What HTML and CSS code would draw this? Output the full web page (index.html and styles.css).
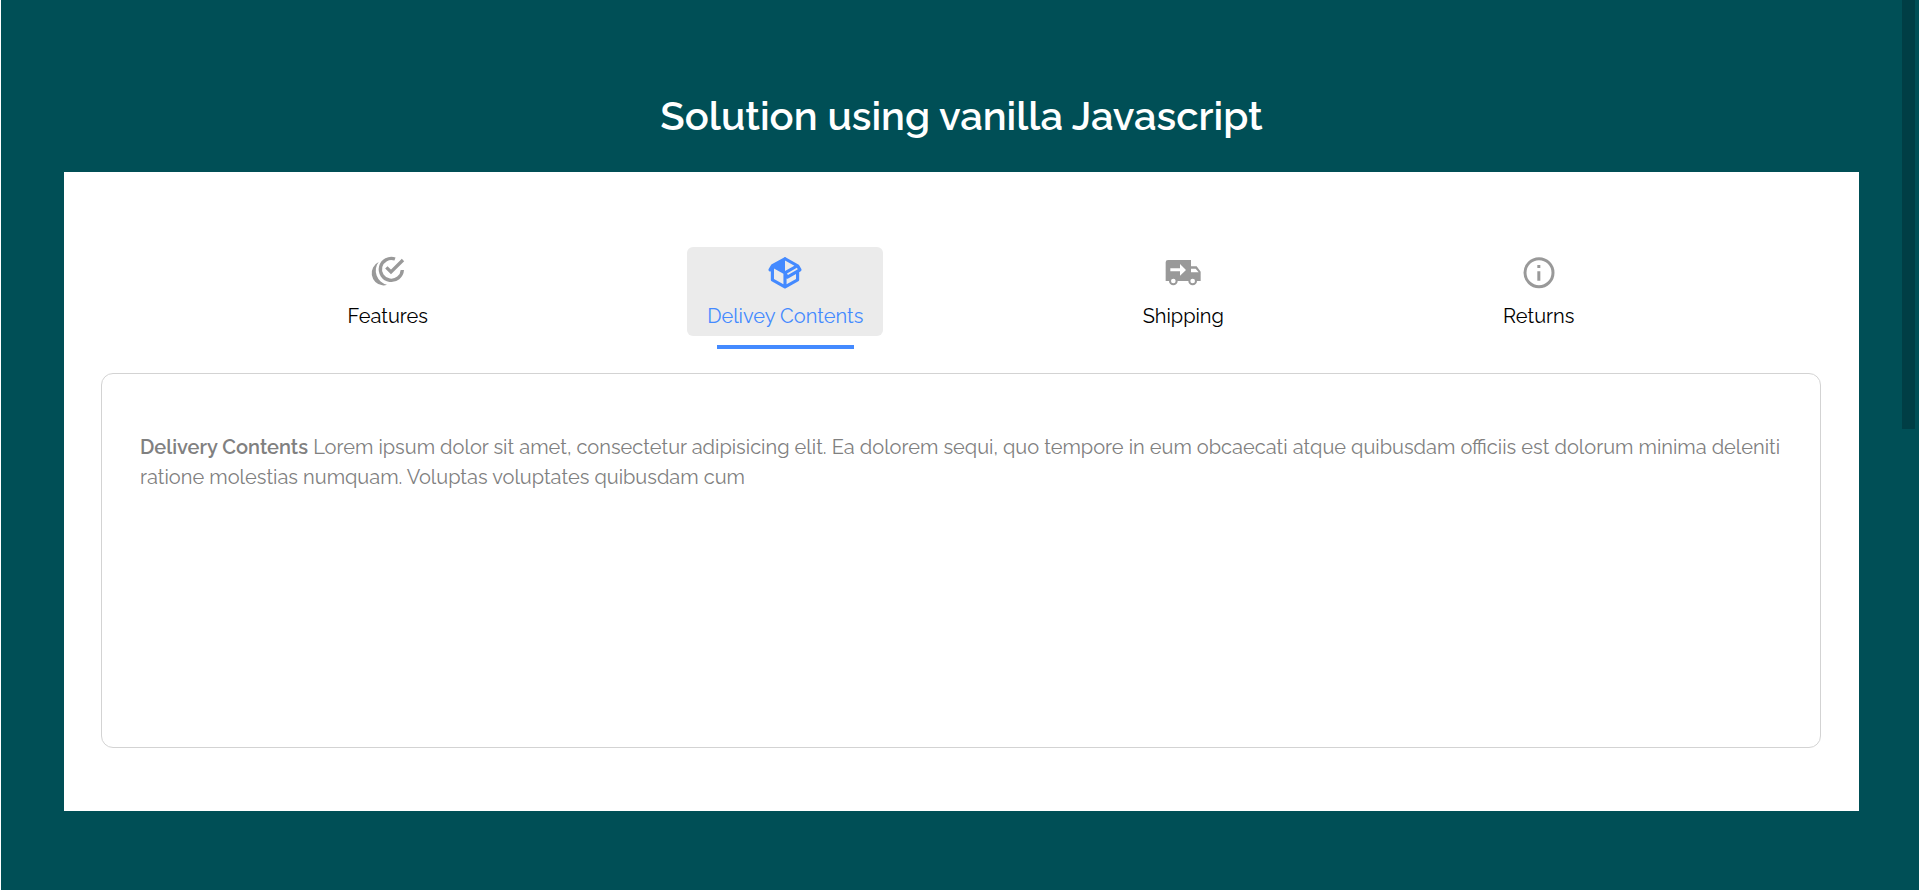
FILE: index.html
```html
<!DOCTYPE html>
<html lang="en">
<head>
<meta charset="utf-8">
<meta name="viewport" content="width=device-width, initial-scale=1">
<title>Tabs</title>
<link rel="stylesheet" href="styles.css">
</head>
<body>
<main class="page">
  <h1 class="title">Solution using vanilla Javascript</h1>
  <section class="card">
    <div class="tabs" role="tablist">
      <button class="tab" type="button" role="tab" aria-selected="false">
        <svg class="icon" viewBox="0 0 108 96" aria-hidden="true">
          <path class="line bold" d="M75 9 A33 33 0 1 0 97 42" />
          <path class="line bold" d="M49 34 L63 48 L99 12" />
          <path class="fill" d="M26 18 A43 43 0 0 0 51 86 Q44 89 37 88 A37 37 0 0 1 26 18 Z" />
        </svg>
        <span>Features</span>
      </button>
      <button class="tab tab-active" type="button" role="tab" id="tab-delivery" aria-selected="true" aria-controls="panel">
        <svg class="icon" viewBox="0.57 1.3 22.86 20.3" aria-hidden="true">
          <path class="fill" d="M2,10.96C1.5,10.68 1.35,10.07 1.63,9.59L3.13,7C3.24,6.8 3.41,6.66 3.6,6.58L11.43,2.18C11.59,2.06 11.79,2 12,2C12.21,2 12.41,2.06 12.57,2.18L20.47,6.62C20.66,6.72 20.82,6.88 20.91,7.08L22.36,9.6C22.64,10.08 22.47,10.69 22,10.96L21,11.54V16.5C21,16.88 20.79,17.21 20.47,17.38L12.57,21.82C12.41,21.94 12.21,22 12,22C11.79,22 11.59,21.94 11.43,21.82L3.53,17.38C3.21,17.21 3,16.88 3,16.5V10.96C2.7,11.13 2.32,11.14 2,10.96M12,4.15V4.15L12,10.85V10.85L17.96,7.5L12,4.15M5,15.91L11,19.29V12.58L5,9.21V15.91M19,15.91V12.69L14,15.59C13.67,15.77 13.3,15.76 13,15.6V19.29L19,15.91M13.85,13.36L20.13,9.73L19.55,8.72L13.27,12.35L13.85,13.36Z" />
        </svg>
        <span>Delivey Contents</span>
      </button>
      <button class="tab" type="button" role="tab" aria-selected="false">
        <svg class="icon" viewBox="0 0 108 96" aria-hidden="true">
          <path class="fill" fill-rule="evenodd" d="M9 12 H78 V31 H95 L107 47 V75 H2 V19 Q2 12 9 12 Z M16 37 V46 H45 V59 L63 42 L45 24 V37 Z M78 38 V49 H101 L92 38 Z" />
          <circle class="ring" cx="25" cy="75" r="10" />
          <circle class="ring" cx="83" cy="75" r="10" />
        </svg>
        <span>Shipping</span>
      </button>
      <button class="tab" type="button" role="tab" aria-selected="false">
        <svg class="icon" viewBox="0 0 108 96" aria-hidden="true">
          <circle class="line" cx="54" cy="50" r="42" />
          <path class="fill" d="M49 27 h9 v9 h-9 Z M49 46 h9 v28 h-9 Z" />
        </svg>
        <span>Returns</span>
      </button>
    </div>
    <div class="panel" id="panel" role="tabpanel" aria-labelledby="tab-delivery">
      <p class="text"><strong>Delivery Contents</strong> Lorem ipsum dolor sit amet, consectetur adipisicing elit. Ea dolorem sequi, quo tempore in eum obcaecati atque quibusdam officiis est dolorum minima deleniti ratione molestias numquam. Voluptas voluptates quibusdam cum</p>
    </div>
  </section>
</main>
<div class="scroll-thumb" aria-hidden="true"></div>
</body>
</html>
```
FILE: styles.css
```css
* { box-sizing: border-box; }
html { background: #004f56; }
body {
  margin: 0;
  border-left: 1px solid #fff;
  background: #004f56;
  font-family: Raleway, Lato, sans-serif;
  font-size: 20px;
  line-height: 30px;
}
.page {
  min-height: 100vh;
  padding: 86px 60px 79px 63px;
}
.title {
  margin: 0 0 26px;
  color: #fff;
  font-size: 40px;
  font-weight: 600;
  line-height: 60px;
  text-align: center;
}
.card {
  padding: 75px 38px 63px 37px;
  background: #fff;
}
.tabs {
  display: flex;
  justify-content: space-around;
  padding: 0 107px;
}
.tab {
  position: relative;
  display: flex;
  flex-direction: column;
  align-items: center;
  gap: 13px;
  padding: 9px 20px 5px;
  border: 0;
  border-radius: 6px;
  background: none;
  color: #000;
  font: inherit;
  cursor: pointer;
}
.tab-active {
  background: #ebebeb;
  color: #448aff;
}
.tab-active::after {
  content: "";
  position: absolute;
  top: calc(100% + 9px);
  left: 15%;
  width: 70%;
  height: 4px;
  background: #448aff;
}
.icon {
  width: 36px;
  height: 32px;
  overflow: visible;
  color: #999;
}
.tab-active .icon { color: #448aff; }
.fill { fill: currentColor; }
.line {
  fill: none;
  stroke: currentColor;
  stroke-width: 9;
}
.bold { stroke-width: 10; }
.ring {
  fill: #fff;
  stroke: currentColor;
  stroke-width: 6;
}
.panel {
  min-height: 375px;
  margin-top: 37px;
  padding: 58px 38px;
  border: 1px solid #d3d3d3;
  border-radius: 12px;
}
.text {
  margin: 0;
  color: #808080;
}
.text strong { font-weight: 600; }
.scroll-thumb {
  position: absolute;
  top: 0;
  right: 4px;
  width: 13px;
  height: 429px;
  background: #003e45;
}
```
